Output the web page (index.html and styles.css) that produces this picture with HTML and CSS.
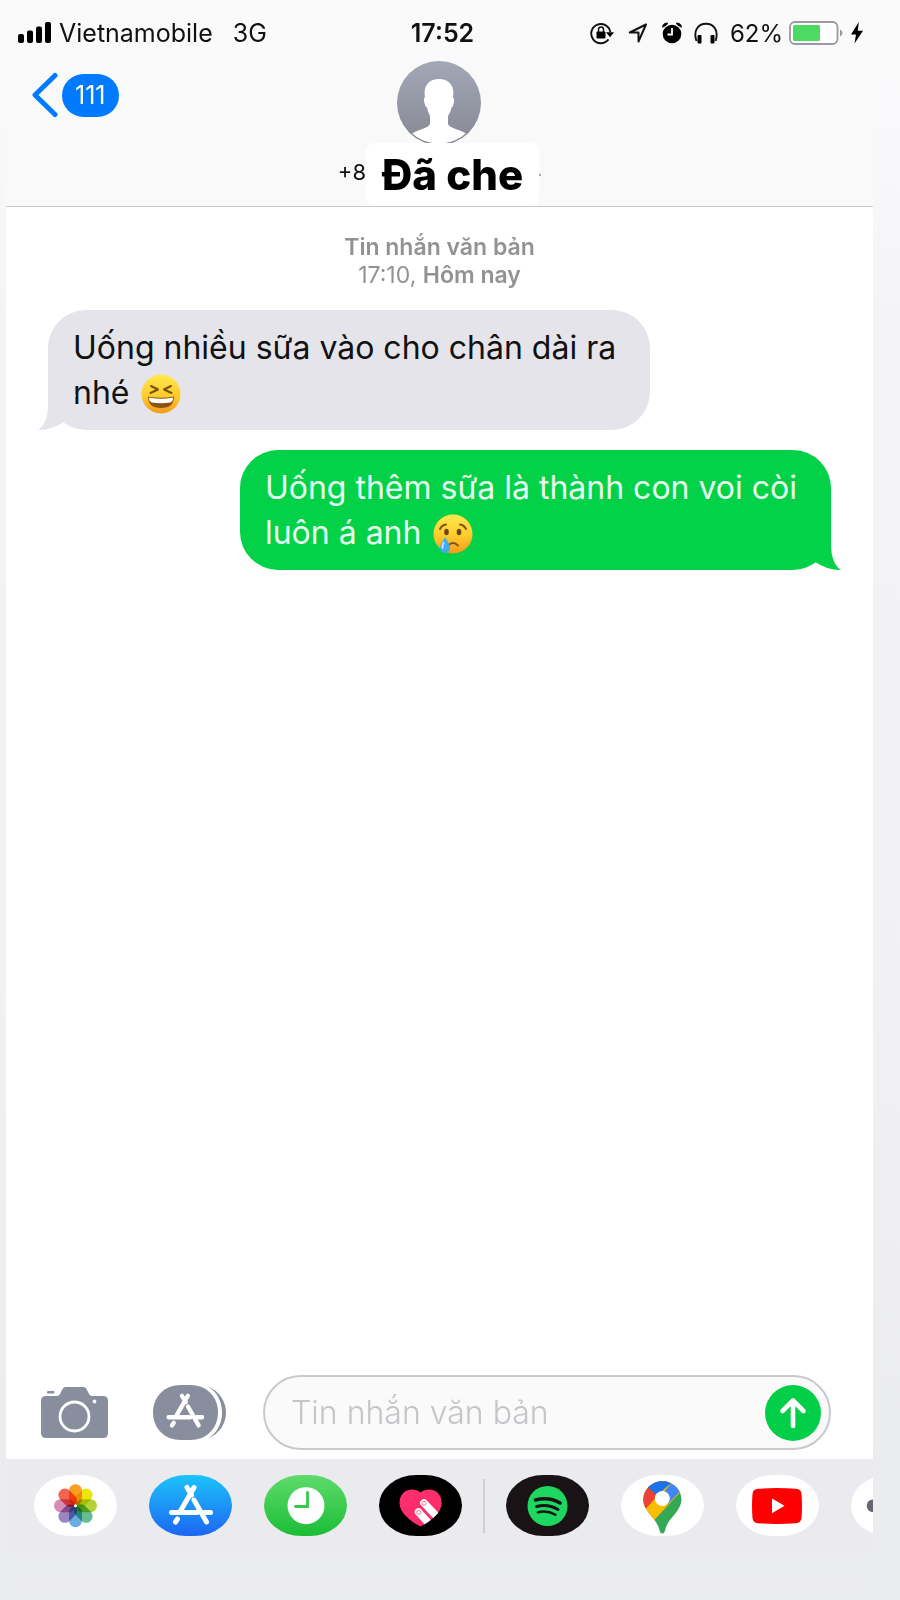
FILE: index.html
```html
<!DOCTYPE html>
<html lang="vi">
<head>
<meta charset="utf-8">
<meta name="viewport" content="width=device-width, initial-scale=1">
<title>Tin nhắn</title>
<link rel="stylesheet" href="styles.css">
</head>
<body>
<svg class="defs" aria-hidden="true">
  <defs>
    <linearGradient id="face" x1="0" y1="0" x2="0" y2="1">
      <stop offset="0" stop-color="#ffe94e"/><stop offset=".55" stop-color="#fdcb2c"/><stop offset="1" stop-color="#f39a1c"/>
    </linearGradient>
    <linearGradient id="avatar" x1="0" y1="0" x2="0" y2="1">
      <stop offset="0" stop-color="#a3a7b6"/><stop offset="1" stop-color="#868993"/>
    </linearGradient>
    <g id="store" fill="none" stroke="#fff" stroke-width="5" stroke-linecap="round">
      <path d="M45 12.500L32 35M38 12.500L42.500 20M28.500 44L26.500 47M45 25L57.500 47"/>
      <path d="M22.500 37.500H48M55 37.500H61.500"/>
    </g>
  </defs>
</svg>

<div class="status">
  <div class="status-left">
    <svg width="34" height="22" viewBox="0 0 34 22"><rect y="12" width="6" height="9" rx="2"/><rect x="9" y="8.500" width="6" height="12.500" rx="2"/><rect x="18" y="4.500" width="6" height="16.500" rx="2"/><rect x="27" y="0" width="6" height="21" rx="2"/></svg>
    <span class="carrier">Vietnamobile</span>
    <span>3G</span>
  </div>
  <time class="clock">17:52</time>
  <div class="status-right">
    <svg class="gap-l" width="24" height="24" viewBox="0 0 24 24"><path d="M18.500 18.400A9.600 9.600 0 1 1 20.300 11" fill="none" stroke="#111" stroke-width="1.900"/><path d="M16 11.200H24L20 16.200Z"/><rect x="6.500" y="10.500" width="9" height="7" rx="1"/><path d="M8.500 11V8.500a2.500 2.500 0 0 1 5 0V11" fill="none" stroke="#111" stroke-width="1.500"/></svg>
    <svg class="gap-l" width="20" height="24" viewBox="0 0 20 24"><path d="M18 3.500L1.800 11.500H10.500V20.500Z" fill="none" stroke="#111" stroke-width="2" stroke-linejoin="round"/></svg>
    <svg class="gap-m" width="20" height="24" viewBox="0 0 20 24"><circle cx="10" cy="13" r="9.300"/><path d="M.6 6.200A4 4 0 0 1 5.600 2.200L4.500 4ZM19.400 6.200A4 4 0 0 0 14.400 2.200L15.500 4Z" stroke="#111"/><path d="M10 7V13.500H5.500" fill="none" stroke="#fff" stroke-width="1.800"/></svg>
    <svg class="gap-m" width="24" height="24" viewBox="0 0 24 24"><path d="M2.500 20C-1 10 4 2.700 12 2.700S25 10 21.500 20" fill="none" stroke="#111" stroke-width="1.900"/><rect x="3.500" y="14" width="4" height="8.500" rx="1"/><rect x="16.500" y="14" width="4" height="8.500" rx="1"/></svg>
    <span class="percent">62%</span>
    <svg class="gap-s" width="54" height="24" viewBox="0 0 54 24"><rect x="1" y="1" width="47.500" height="22" rx="5" fill="#fff" stroke="#9a9a9c" stroke-width="1.800"/><rect x="4" y="4" width="27" height="16" rx="1.500" fill="#4cd964"/><path d="M51 8.500Q53.500 9.500 53.500 12T51 15.500Z" fill="#9a9a9c"/></svg>
    <svg width="12" height="24" viewBox="0 0 12 24"><path d="M7.800 1L0 13.500H5L3.500 22.500L12 9.800H6.800Z"/></svg>
  </div>
</div>

<main class="screen">
  <header class="header">
    <button class="back" type="button" aria-label="Quay lại, 111 tin nhắn">
      <svg width="26" height="46" viewBox="0 0 26 46"><path d="M23 3.500L3 23L23 42.500" fill="none" stroke="#007aff" stroke-width="5" stroke-linecap="round" stroke-linejoin="round"/></svg>
      <span class="badge">111</span>
    </button>
    <div class="contact">
      <svg class="avatar" width="84" height="82" viewBox="0 0 84 82">
        <clipPath id="round"><circle cx="42" cy="42" r="40.500"/></clipPath>
        <circle cx="42" cy="42" r="42" fill="url(#avatar)"/>
        <path clip-path="url(#round)" fill="#fff" d="M42 18C31 18 26 26 28 36Q26 37 27.500 42Q28.500 46 30 46.500Q31 52 33 55V63C31 68 20 68 13 74L20 88H64L71 74C64 68 53 68 51 63V55Q53.500 52 54.500 46.500Q56 46 57 41Q57.500 37 56 36C58 26 53 18 42 18Z"/>
      </svg>
      <div class="name-row">
        <span class="prefix">+8</span>
        <h1 class="cover">Đã che</h1>
        <span class="speck"></span>
      </div>
    </div>
  </header>

  <section class="thread">
    <p class="stamp"><strong>Tin nhắn văn bản</strong><br>17:10, <strong>Hôm nay</strong></p>
    <div class="bubble received">
      <p>Uống nhiều sữa vào cho chân dài ra<br>nhé <svg class="emoji" role="img" aria-label="cười tít mắt" viewBox="0 0 40 40"><circle cx="20" cy="20" r="19.500" fill="url(#face)"/><path d="M10 12L17 15.500L9.500 19M30 12L23 15.500L30.500 19" fill="none" stroke="#79500e" stroke-width="2" stroke-linecap="round" stroke-linejoin="round"/><path d="M7 22.500Q20 25 33 22.500Q33 34 20 34T7 22.500Z" fill="#8a5310"/><path d="M8 23.500Q20 26 32 23.500Q32 28 29 28.500Q20 30 11 28.500Q8 28 8 23.500Z" fill="#fff"/></svg></p>
      <svg class="tail tail-left" viewBox="0 0 40 45"><path d="M10 0V19C10 33 6 41 0 45C10 45 18 42 25 37.500L38 10Z" fill="#e5e4eb"/></svg>
    </div>
    <div class="bubble sent">
      <p>Uống thêm sữa là thành con voi còi<br>luôn á anh <svg class="emoji" role="img" aria-label="khóc" viewBox="0 0 40 40"><circle cx="20" cy="20" r="19.500" fill="url(#face)"/><ellipse cx="13.500" cy="18" rx="2.300" ry="3.200" fill="#704612"/><ellipse cx="26" cy="18" rx="2.300" ry="3.200" fill="#704612"/><path d="M7 15Q9 11 13 10.500M27 10.500Q31 11 33 15M15 31.500Q20 26.500 25 31.500" fill="none" stroke="#805313" stroke-width="1.900" stroke-linecap="round"/><path d="M12 23.500Q7 30 7 34A5 5 0 0 0 17 34Q17 30 12 23.500Z" fill="#41acf0"/><path d="M11 28Q8.500 32 10 34.500" fill="none" stroke="#b9e8ff" stroke-width="2"/></svg></p>
      <svg class="tail tail-right" viewBox="0 0 40 45"><path d="M30 0V19C30 33 34 41 40 45C30 45 22 42 15 37.500L2 10Z" fill="#03d147"/></svg>
    </div>
  </section>

  <form class="composer">
    <button class="tool" type="button" aria-label="Máy ảnh">
      <svg width="68" height="52" viewBox="0 0 68 52"><path fill="#888e9d" d="M5 9H16Q18 9 19 7L21 3Q22 0 25 0H42Q45 0 46 3L48 7Q49 9 51 9H62Q67 9 67 14V46Q67 51 62 51H5Q0 51 0 46V14Q0 9 5 9Z"/><rect x="6" y="4" width="7.500" height="2.500" rx="1" fill="#888e9d"/><circle cx="33.500" cy="29.500" r="14.500" fill="none" stroke="#fff" stroke-width="2.800"/><circle cx="53.500" cy="14.500" r="1.900" fill="#fff"/></svg>
    </button>
    <button class="tool store-tool" type="button" aria-label="Ứng dụng">
      <svg width="74" height="55" viewBox="0 0 74 55"><path fill="#888e9d" d="M28 0H37C54 0 65 12 65 27.500S54 55 37 55H28C11 55 0 43 0 27.500S11 0 28 0Z"/><path fill="#888e9d" d="M55 1.500C66 6 73 16 73 27.500S66 49 55 53.500C64 48 69 39 69 27.500S64 7 55 1.500Z"/><use href="#store" transform="translate(-3.800 0) scale(.86)"/></svg>
    </button>
    <div class="field">
      <input type="text" placeholder="Tin nhắn văn bản" aria-label="Tin nhắn văn bản">
      <button class="send" type="submit" aria-label="Gửi"><svg width="56" height="56" viewBox="0 0 56 56"><path d="M28 41V17M17.500 26L28 15.500L38.500 26" fill="none" stroke="#fff" stroke-width="4.600" stroke-linecap="round" stroke-linejoin="round"/></svg></button>
    </div>
  </form>

  <nav class="tray" aria-label="Ứng dụng">
    <div class="apps">
      <button class="app" type="button" aria-label="Ảnh"><svg viewBox="0 0 83 61"><g class="petals" transform="translate(41.500 30.700)">
        <rect x="-6.500" y="-21.500" width="13" height="21" rx="6.500" fill="#fa9f22"/>
        <rect x="-6.500" y="-21.500" width="13" height="21" rx="6.500" fill="#eee40c" transform="rotate(45)"/>
        <rect x="-6.500" y="-21.500" width="13" height="21" rx="6.500" fill="#b2d235" transform="rotate(90)"/>
        <rect x="-6.500" y="-21.500" width="13" height="21" rx="6.500" fill="#65bd91" transform="rotate(135)"/>
        <rect x="-6.500" y="-21.500" width="13" height="21" rx="6.500" fill="#6aaee0" transform="rotate(180)"/>
        <rect x="-6.500" y="-21.500" width="13" height="21" rx="6.500" fill="#9c86c1" transform="rotate(225)"/>
        <rect x="-6.500" y="-21.500" width="13" height="21" rx="6.500" fill="#d78bb7" transform="rotate(270)"/>
        <rect x="-6.500" y="-21.500" width="13" height="21" rx="6.500" fill="#f46450" transform="rotate(315)"/>
      </g><circle cx="41.500" cy="30.700" r="1.500" fill="#fff"/></svg></button>
      <button class="app app-store" type="button" aria-label="App Store"><svg viewBox="0 0 83 61"><use href="#store"/></svg></button>
      <button class="app app-recent" type="button" aria-label="Gần đây"><svg viewBox="0 0 83 61"><circle cx="42" cy="30.700" r="18.500" fill="#fff"/><path d="M43.500 17.500V31.500H31.500" fill="none" stroke="#35c94c" stroke-width="2.800" stroke-linecap="round"/></svg></button>
      <button class="app app-touch" type="button" aria-label="Digital Touch"><svg viewBox="0 0 83 61"><clipPath id="heart"><path d="M41.500 17.500C35 11.500 20.500 14 20.500 28C20.500 38 32 46.500 41.500 51.500C51 46.500 62.700 38 62.700 28C62.700 14 48 11.500 41.500 17.500Z"/></clipPath><g clip-path="url(#heart)"><path fill="#ff2d6b" d="M20 10H64V53H20Z"/><path d="M45 28L61 45M39.500 37L54 53" stroke="#fff" stroke-width="7.600" stroke-linecap="round"/></g><circle cx="45" cy="28.300" r="2" fill="none" stroke="#ff6d97"/><circle cx="39.700" cy="37.300" r="2" fill="none" stroke="#ff6d97"/></svg></button>
    </div>
    <span class="divider"></span>
    <div class="apps">
      <button class="app app-spotify" type="button" aria-label="Spotify"><svg viewBox="0 0 83 61"><circle cx="41.500" cy="31" r="20" fill="#1ed760"/><g fill="none" stroke="#191414" stroke-linecap="round"><path d="M29.500 25Q43 21.500 54 28" stroke-width="3.600"/><path d="M30.700 31.500Q42 28.500 52 34.500" stroke-width="3"/><path d="M31.800 37.300Q41 35 49.500 39.800" stroke-width="2.400"/></g></svg></button>
      <button class="app" type="button" aria-label="Google Maps"><svg viewBox="0 0 83 61"><clipPath id="pin"><path d="M22.200 24A19.200 19.200 0 0 1 60.500 24C60.500 37 47 42 44 55.500Q43.500 58.500 41.300 58.500T38.600 55.500C36 43 22.200 37 22.200 24Z"/></clipPath><g clip-path="url(#pin)"><path fill="#34a853" d="M20 0H64V61H20Z"/><path fill="#fbbc04" d="M20 0H64V12L30 48.500L18 40Z"/><path fill="#ea4335" d="M20 0H50L41 16L20 39Z"/><path fill="#1a73e8" d="M22 8.500L36 20L60 0H22Z"/><path fill="#4285f4" d="M56 2L41 19L46 30L64 11Z"/></g><circle cx="41.300" cy="23.500" r="7.500" fill="#fff"/></svg></button>
      <button class="app" type="button" aria-label="YouTube"><svg viewBox="0 0 83 61"><path fill="#f00" d="M22 13.700Q41 12.500 60 13.700Q65 14 65.500 19Q66.500 31 65.500 43Q65 48 60 48.300Q41 49.500 22 48.300Q17 48 16.500 43Q15.500 31 16.500 19Q17 14 22 13.700Z"/><path d="M36 23.500L48.500 30.800L36 38.200Z" fill="#fff"/></svg></button>
      <button class="app" type="button" aria-label="Thêm"><svg viewBox="0 0 83 61"><g fill="#65666d"><circle cx="22" cy="30.700" r="6.300"/><circle cx="41.500" cy="30.700" r="6.300"/><circle cx="61" cy="30.700" r="6.300"/></g></svg></button>
    </div>
  </nav>
</main>
</body>
</html>
```
FILE: styles.css
```css
* { box-sizing: border-box; }

body {
  margin: 0;
  min-height: 100vh;
  display: flex;
  flex-direction: column;
  font-family: Inter, "Liberation Sans", sans-serif;
  color: #111;
  background: linear-gradient(#fafafb 0, #f9f9fb 120px, #f4f4f7 320px, #f1f1f5 1000px, #ebecef 1450px, #ebecef 100%);
}

svg { display: block; }
h1, p { margin: 0; }
button {
  padding: 0;
  border: 0;
  background: none;
  font: inherit;
}
.defs { position: absolute; width: 0; height: 0; }

/* Status bar */
.status {
  display: grid;
  grid-template-columns: 1fr auto 1fr;
  align-items: center;
  height: 61px;
  padding: 5px 37px 0 18px;
  font-size: 25px;
}
.status-left, .status-right { display: flex; align-items: center; }
.status-right { justify-content: flex-end; }
.carrier { margin: 0 20px 0 7px; }
.clock { margin-left: 4px; font-weight: 600; }
.gap-l { margin-right: 14px; }
.gap-m { margin-right: 12px; }
.gap-s { margin-right: 8px; }
.percent { margin-right: 6px; font-size: 24px; }

/* Screen */
.screen {
  flex: 1;
  display: flex;
  flex-direction: column;
  margin: 0 27px 0 6px;
  min-width: 0;
}
.header {
  display: grid;
  grid-template-columns: 1fr auto 1fr;
  align-items: start;
  background: #f9f9fa;
  border-bottom: 1px solid #cccccf;
}
.back {
  display: flex;
  align-items: center;
  gap: 4px;
  margin: 11px 0 0 26px;
  justify-self: start;
}
.badge {
  padding: 0 13px;
  border-radius: 22px;
  background: #007aff;
  color: #fff;
  font-size: 25px;
  line-height: 43px;
}
.contact { display: flex; flex-direction: column; align-items: center; }
.name-row { display: flex; align-items: center; }
.prefix { padding-bottom: 6px; font-size: 22px; }
.cover {
  padding: 0 16px;
  border-radius: 8px;
  background: #fff;
  color: #000;
  font-size: 42px;
  font-weight: 800;
  line-height: 63px;
}
.speck { width: 2px; height: 2px; background: #aaa; }

/* Messages */
.thread {
  flex: 1;
  display: flex;
  flex-direction: column;
  align-items: flex-start;
  padding: 26px 42px 20px;
  background: #fff;
}
.stamp {
  align-self: center;
  margin-bottom: 21px;
  color: #929295;
  font-size: 23px;
  line-height: 28px;
  text-align: center;
}
.stamp strong { font-weight: 600; }
.bubble {
  position: relative;
  padding: 15px 34px 15px 25px;
  border-radius: 38px;
  font-size: 32px;
  line-height: 45px;
}
.bubble + .bubble { margin-top: 20px; }
.received { background: #e5e4eb; }
.sent { align-self: flex-end; background: #03d147; color: #e6fff0; }
.emoji {
  display: inline-block;
  width: 40px;
  height: 40px;
  margin: -4px 0 -4px 3px;
  vertical-align: -6px;
}
.tail { position: absolute; bottom: 0; width: 40px; height: 45px; }
.tail-left { left: -10px; }
.tail-right { right: -10px; }

/* Composer */
.composer {
  display: flex;
  align-items: center;
  padding: 0 42px 9px 35px;
  background: #fff;
}
.store-tool { margin: 0 36px 0 44px; }
.field {
  flex: 1;
  min-width: 0;
  display: flex;
  align-items: center;
  height: 75px;
  padding: 0 8px 0 26px;
  border: 2px solid #c9c9cd;
  border-radius: 38px;
  background: #fafafb;
}
.field input {
  flex: 1;
  min-width: 0;
  padding: 0;
  border: 0;
  outline: 0;
  background: none;
  font: 300 32px Inter, "Liberation Sans", sans-serif;
  color: #111;
}
.field input::placeholder { color: #c4c4c9; opacity: 1; }
.send { border-radius: 50%; background: #03ce48; }

/* App tray */
.tray {
  display: flex;
  align-items: center;
  gap: 21px;
  padding: 16px 0 64px 28px;
  overflow: hidden;
  background: linear-gradient(#eaeaef, #ebecef);
}
.apps { display: flex; flex: none; gap: 32px; }
.app {
  width: 83px;
  height: 61px;
  overflow: hidden;
  border-radius: 38px / 31px;
  background: #fff;
}
.app-store { background: linear-gradient(#1cc3fb, #1d66f2); }
.app-recent { background: linear-gradient(#5edb6c, #1cbd35); }
.app-touch { background: #000; }
.app-spotify { background: #191316; }
.petals rect { mix-blend-mode: multiply; }
.petals { isolation: isolate; }
.divider { flex: none; width: 2px; height: 54px; background: #cfcfd3; }
```
